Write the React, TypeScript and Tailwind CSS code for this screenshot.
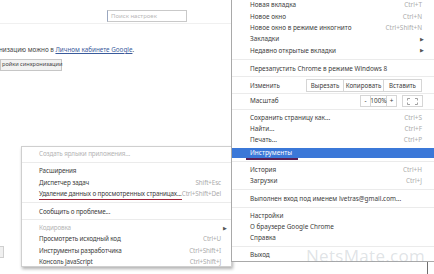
import React from 'react';

type ItemProps = {
    label: string,
    shortcut?: string,
    arrow?: boolean,
    muted?: boolean,
    h?: string,
    pl?: string,
    pr?: string,
    underline?: string,
}

const Item = ({ label, shortcut, arrow, muted, h = 'h-[11.3px]', pl = 'pl-[18px]', pr = 'pr-[12px]', underline }: ItemProps) => (
    <div className={`${h} ${pl} ${pr} flex items-center justify-between whitespace-nowrap`}>
        <span className={`relative ${muted ? 'text-[#b4b4b4]' : 'text-[#3c3c3c]'}`}>
            {label}
            {underline && <span className={`absolute left-0 right-0 -bottom-[3px] h-[1.5px] ${underline}`} />}
        </span>
        {shortcut && <span className="text-[#ababab]">{shortcut}</span>}
        {arrow && <span className="text-[#555] text-[5px]">▶</span>}
    </div>
)

const Sep = ({ h }: { h: string }) => (
    <div className={`${h} flex items-center`}>
        <div className="w-full h-px bg-[#ebebeb]" />
    </div>
)

const EditRow = () => (
    <div className="h-[13px] pl-[18px] pr-[12px] flex items-center justify-between whitespace-nowrap">
        <span className="text-[#3c3c3c]">Изменить</span>
        <div className="flex h-[13px] border border-[#d6d6d6] text-[#3c3c3c]">
            <div className="w-[36px] flex items-center justify-center">Вырезать</div>
            <div className="w-[40px] flex items-center justify-center border-l border-[#d6d6d6]">Копировать</div>
            <div className="w-[38px] flex items-center justify-center border-l border-[#d6d6d6]">Вставить</div>
        </div>
    </div>
)

const ZoomRow = () => (
    <div className="h-[12px] pl-[18px] pr-[11px] flex items-center justify-between whitespace-nowrap">
        <span className="text-[#3c3c3c]">Масштаб</span>
        <div className="flex gap-[5px] h-[12px]">
            <div className="flex border border-[#d6d6d6] text-[#3c3c3c]">
                <div className="w-[9px] flex items-center justify-center">-</div>
                <div className="w-[17px] flex items-center justify-center border-x border-[#d6d6d6]">100%</div>
                <div className="w-[9px] flex items-center justify-center">+</div>
            </div>
            <div className="w-[21px] border border-[#d6d6d6] flex items-center justify-center">
                <svg width="11" height="7" viewBox="0 0 11 7" fill="none" stroke="#8a8a8a" strokeWidth="0.8">
                    <path d="M0.5 2.5V0.5H3M8 0.5H10.5V2.5M10.5 4.5V6.5H8M3 6.5H0.5V4.5" />
                </svg>
            </div>
        </div>
    </div>
)

const MainMenu = () => (
    <div className="absolute left-[231px] top-0 w-[203px] h-[262px] bg-white border-l border-b border-[#a9a9a9] text-[6.4px] leading-none">
        <Item label="Новая вкладка" shortcut="Ctrl+T" />
        <Item label="Новое окно" shortcut="Ctrl+N" />
        <Item label="Новое окно в режиме инкогнито" shortcut="Ctrl+Shift+N" />
        <Item label="Закладки" arrow pr="pr-[10px]" />
        <Item label="Недавно открытые вкладки" arrow pr="pr-[10px]" />
        <Sep h="h-[7px]" />
        <Item label="Перезапустить Chrome в режиме Windows 8" h="h-[11px]" />
        <Sep h="h-[5px]" />
        <div className="text-[6.2px]">
            <EditRow />
        </div>
        <Sep h="h-[3px]" />
        <ZoomRow />
        <Sep h="h-[5px]" />
        <Item label="Сохранить страницу как..." shortcut="Ctrl+S" h="h-[11px]" />
        <Item label="Найти..." shortcut="Ctrl+F" h="h-[11px]" />
        <Item label="Печать..." shortcut="Ctrl+P" h="h-[11px]" />
        <div className="mt-[2.5px] h-[10.5px] bg-[#3b78d8] pl-[18px] flex items-center">
            <span className="relative text-white">
                Инструменты
                <span className="absolute -left-[4px] -right-[6px] -bottom-[3.5px] h-[1.5px] bg-[#5a1f55]" />
            </span>
        </div>
        <Sep h="h-[6px]" />
        <Item label="История" shortcut="Ctrl+H" h="h-[11px]" />
        <Item label="Загрузки" shortcut="Ctrl+J" h="h-[11px]" />
        <Sep h="h-[7px]" />
        <Item label="Выполнен вход под именем lvetras@gmail.com..." h="h-[11px]" />
        <Sep h="h-[6px]" />
        <Item label="Настройки" h="h-[11px]" />
        <Item label="О браузере Google Chrome" h="h-[11px]" />
        <Item label="Справка" h="h-[11px]" />
        <Sep h="h-[6px]" />
        <Item label="Выход" h="h-[11px]" />
    </div>
)

const ToolsMenu = () => (
    <div className="absolute left-[21px] top-[146px] w-[211px] h-[121px] bg-white border border-[#cfcfcf] shadow-[1px_2px_3px_rgba(0,0,0,0.3)] pt-[1.5px] text-[6.3px] tracking-[-0.12px] leading-none">
        <Item label="Создать ярлыки приложения..." muted pl="pl-[17px]" pr="pr-[10px]" />
        <Sep h="h-[6px]" />
        <Item label="Расширения" pl="pl-[17px]" pr="pr-[10px]" />
        <Item label="Диспетчер задач" shortcut="Shift+Esc" pl="pl-[17px]" pr="pr-[10px]" />
        <Item label="Удаление данных о просмотренных страницах..." shortcut="Ctrl+Shift+Del" pl="pl-[17px]" pr="pr-[10px]" underline="bg-[#a3243a]" />
        <Sep h="h-[6.5px]" />
        <Item label="Сообщить о проблеме..." pl="pl-[17px]" pr="pr-[10px]" />
        <Sep h="h-[5px]" />
        <Item label="Кодировка" muted arrow pl="pl-[17px]" pr="pr-[4px]" />
        <Item label="Просмотреть исходный код" shortcut="Ctrl+U" pl="pl-[17px]" pr="pr-[10px]" />
        <Item label="Инструменты разработчика" shortcut="Ctrl+Shift+I" pl="pl-[17px]" pr="pr-[10px]" />
        <Item label="Консоль JavaScript" shortcut="Ctrl+Shift+J" pl="pl-[17px]" pr="pr-[10px]" />
    </div>
)

export default function App() {
    return (
        <div className="relative w-[434px] h-[274px] overflow-hidden bg-white text-[#333]" style={{ fontFamily: '"Noto Sans", "Open Sans", sans-serif' }}>
            <div className="h-[24px] border-b border-[#f0f0f0] pl-[107px] pt-[10px]">
                <div className="w-[80px] h-[12px] border border-[#c9c9c9] border-l-[#9aa7c0] flex items-center px-[3px] text-[6px] text-[#b8b8b8] whitespace-nowrap">
                    Поиск настроек
                </div>
            </div>
            <div className="pt-[23px] text-[6.3px] leading-none text-[#444] whitespace-nowrap">
                <div className="h-[8px] -ml-[1px]">
                    низацию можно в <span className="text-[#3a5b9c] underline">Личном кабинете Google</span>.
                </div>
                <div className="mt-[4px] w-[62px] h-[12px] bg-[#f2f2f2] border border-[#c6c6c6] flex items-center pl-[1px] text-[5.6px] text-[#444]">
                    ройки синхронизации
                </div>
            </div>
            <div className="absolute left-0 top-[246px] w-[4px] h-[12px] bg-[#f0f0f0] border border-l-0 border-[#cfcfcf]" />
            <ToolsMenu />
            <MainMenu />
            <div className="absolute left-[427px] top-[262px] w-px h-[12px] bg-[#6e6e6e]" />
            <div className="absolute left-[306px] top-[247px] text-[17px] leading-none text-[rgba(150,160,170,0.3)] tracking-[0.3px] pointer-events-none" style={{ fontFamily: '"Open Sans", sans-serif' }}>
                NetsMate.com
            </div>
        </div>
    )
}
